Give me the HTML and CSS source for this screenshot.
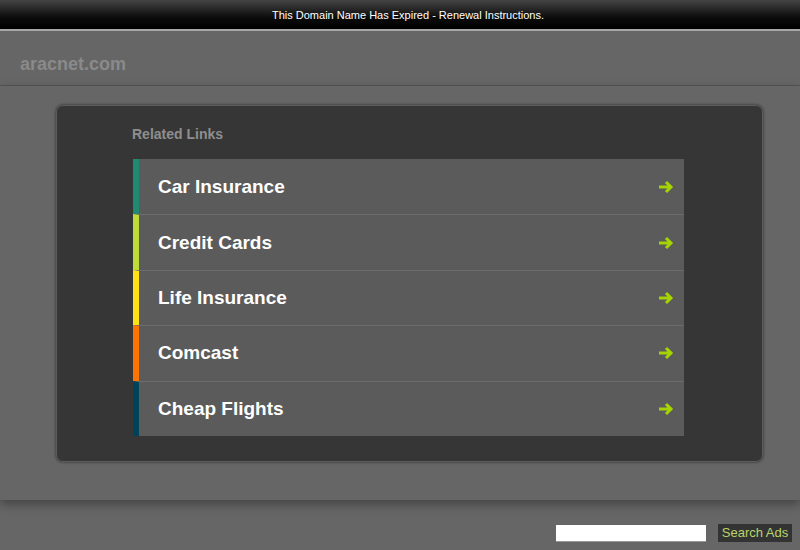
FILE: index.html
```html
<!DOCTYPE html>
<html>
<head>
<meta charset="utf-8">
<link rel="stylesheet" href="styles.css">
</head>
<body>
<div class="topbar">This Domain Name Has Expired - Renewal Instructions.</div>
<div class="header"><span class="domain">aracnet.com</span></div>
<div class="main">
  <div class="panel">
    <div class="title">Related Links</div>
    <ul class="links">
      <li class="row c1"><span class="label">Car Insurance</span><svg class="arrow" width="16" height="14" viewBox="0 0 16 14"><path d="M1 7H13M8 2L13 7L8 12" fill="none" stroke="#a6d400" stroke-width="3"/></svg></li>
      <li class="row c2"><span class="label">Credit Cards</span><svg class="arrow" width="16" height="14" viewBox="0 0 16 14"><path d="M1 7H13M8 2L13 7L8 12" fill="none" stroke="#a6d400" stroke-width="3"/></svg></li>
      <li class="row c3"><span class="label">Life Insurance</span><svg class="arrow" width="16" height="14" viewBox="0 0 16 14"><path d="M1 7H13M8 2L13 7L8 12" fill="none" stroke="#a6d400" stroke-width="3"/></svg></li>
      <li class="row c4"><span class="label">Comcast</span><svg class="arrow" width="16" height="14" viewBox="0 0 16 14"><path d="M1 7H13M8 2L13 7L8 12" fill="none" stroke="#a6d400" stroke-width="3"/></svg></li>
      <li class="row c5"><span class="label">Cheap Flights</span><svg class="arrow" width="16" height="14" viewBox="0 0 16 14"><path d="M1 7H13M8 2L13 7L8 12" fill="none" stroke="#a6d400" stroke-width="3"/></svg></li>
    </ul>
  </div>
</div>
<div class="search">
  <input class="field" type="text">
  <button class="btn">Search Ads</button>
</div>
</body>
</html>
```
FILE: styles.css
```css
html, body {
  margin: 0;
  padding: 0;
}
body {
  background: #666666;
  font-family: "Liberation Sans", Arial, sans-serif;
  width: 800px;
  height: 550px;
  overflow: hidden;
}
.topbar {
  height: 29px;
  line-height: 30px;
  background: linear-gradient(#444444, #0c0c0c 60%, #000000);
  color: #ffffff;
  font-size: 11px;
  text-align: center;
  padding-left: 16px;
  border-bottom: 2px solid #a8a8a8;
}
.header {
  border-bottom: 1px solid #555555;
  box-sizing: border-box;
  height: 55px;
  padding: 23px 0 0 20px;
}
.domain {
  font-size: 18px;
  font-weight: bold;
  color: #8a8a8a;
}
.main {
  height: 414px;
  padding-top: 19px;
  box-sizing: border-box;
  background: #666666;
  box-shadow: 0 4px 10px rgba(0, 0, 0, 0.35);
  position: relative;
}
.panel {
  margin-left: 56px;
  width: 707px;
  height: 357px;
  box-sizing: border-box;
  background: #363636;
  border: 1px solid #5c5c5c;
  border-radius: 7px;
  box-shadow: 0 0 3px rgba(0, 0, 0, 0.6);
  padding: 20px 0 0 75px;
}
.title {
  font-size: 14px;
  font-weight: bold;
  color: #8e8e8e;
  height: 33px;
}
.links {
  list-style: none;
  margin: 0 0 0 1px;
  padding: 0;
  width: 551px;
}
.row {
  display: flex;
  align-items: center;
  justify-content: space-between;
  box-sizing: border-box;
  height: 55.4px;
  background: #5b5b5b;
  border-left: 6px solid;
  padding: 0 10px 0 19px;
}
.row + .row {
  border-top: 1px solid #6c6c6c;
}
.c1 { border-left-color: #1f8a70; }
.c2 { border-left-color: #bedb39; }
.c3 { border-left-color: #ffe11a; }
.c4 { border-left-color: #fd7400; }
.c5 { border-left-color: #004358; }
.label {
  font-size: 19px;
  font-weight: bold;
  color: #ffffff;
}
.arrow {
  display: block;
}
.search {
  display: flex;
  justify-content: flex-end;
  align-items: center;
  gap: 12px;
  padding: 24px 8px 0 0;
}
.field {
  width: 150px;
  height: 17px;
  box-sizing: border-box;
  border: none;
  border-bottom: 1px solid #999;
  background: #ffffff;
  margin: 0;
}
.btn {
  height: 18px;
  width: 74px;
  padding: 0;
  margin: 0;
  border: none;
  background: #333333;
  color: #b9d36a;
  font-family: "Liberation Sans", Arial, sans-serif;
  font-size: 13px;
  line-height: 18px;
}
```
